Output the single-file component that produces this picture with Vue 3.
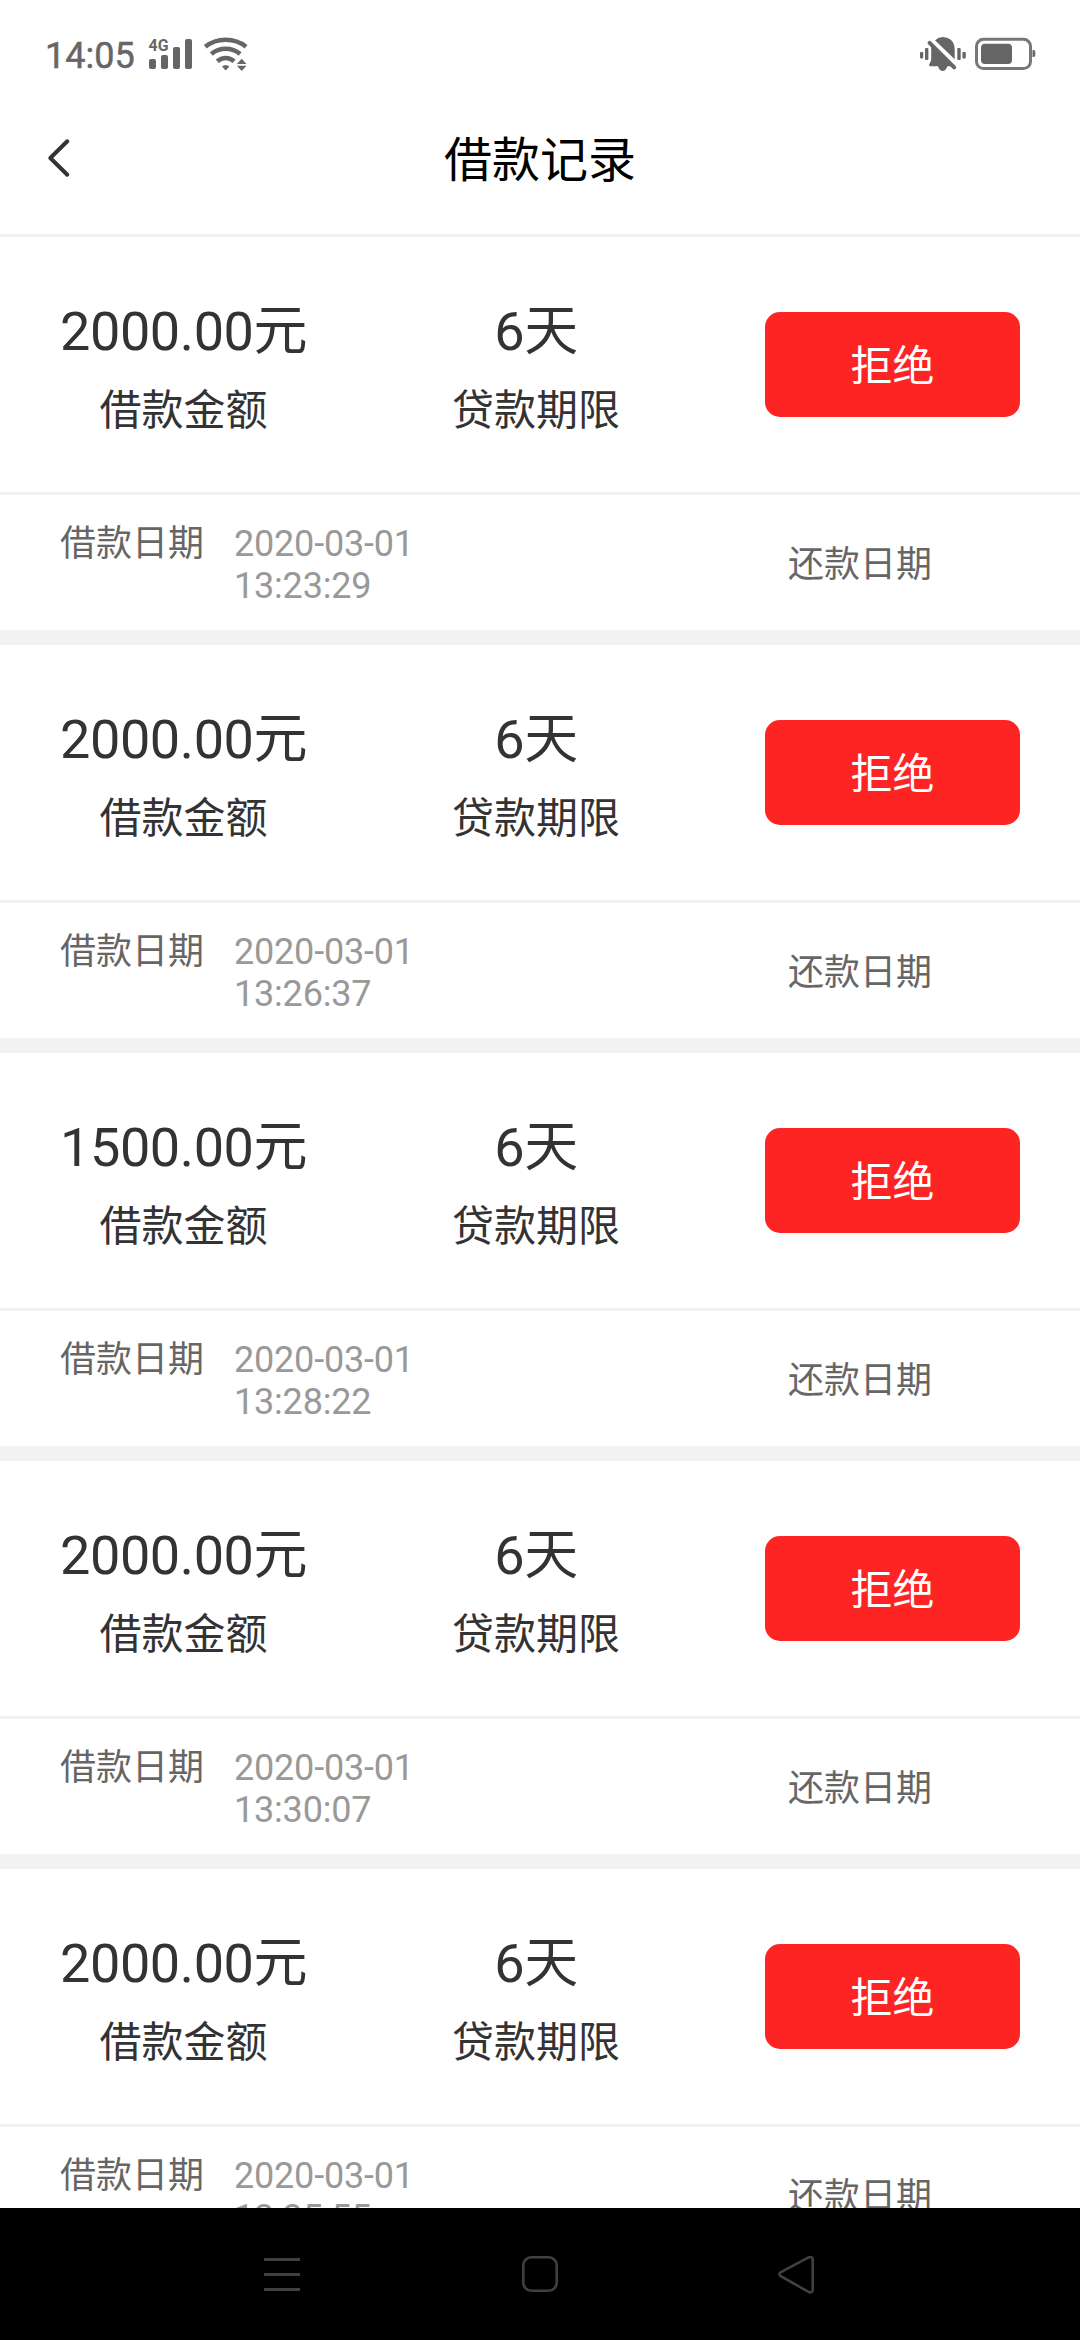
<script setup>
const records = [
  { amount: '2000.00', days: 6, date: '2020-03-01', time: '13:23:29' },
  { amount: '2000.00', days: 6, date: '2020-03-01', time: '13:26:37' },
  { amount: '1500.00', days: 6, date: '2020-03-01', time: '13:28:22' },
  { amount: '2000.00', days: 6, date: '2020-03-01', time: '13:30:07' },
  { amount: '2000.00', days: 6, date: '2020-03-01', time: '13:35:55' },
]
</script>

<template>
  <div class="screen">
    <div class="status">
      <span class="clock">14:05</span>
      <svg class="signal" width="104" height="40" viewBox="146 35 104 40">
        <g fill="#666">
          <text x="148.5" y="51" font-size="17" font-weight="700" textLength="20" lengthAdjust="spacingAndGlyphs">4G</text>
          <rect x="149" y="59" width="7" height="10" rx="2" />
          <rect x="161" y="55" width="7" height="14" rx="2" />
          <rect x="173" y="47" width="7" height="22" rx="2" />
          <rect x="185" y="39" width="7" height="30" rx="2" />
          <path d="M222 66.5q3.7-3 7.4 0l-3.7 4z" />
          <path d="M241.7 58.8l4.8 5.2h-9.6zM241.7 71l4.8-5.2h-9.6z" />
        </g>
        <g fill="none" stroke="#666" stroke-width="4.6">
          <path d="M205.3 46.8Q214 39.8 225.7 39.8T246.1 46.8" />
          <path d="M211.3 54Q217.5 48.8 225.7 48.8T240.1 54" />
          <path d="M217.3 61.3Q221 58 225.7 58T234.1 61.3" />
        </g>
      </svg>
      <svg class="power" width="120" height="40" viewBox="918 35 120 40">
        <g fill="#666">
          <rect x="920" y="52" width="3.2" height="6.4" rx="1" />
          <rect x="925" y="48" width="3.4" height="12" rx="1" />
          <rect x="957.3" y="48" width="3.4" height="12" rx="1" />
          <rect x="962.4" y="52" width="3.4" height="6.4" rx="1" />
          <path d="M935 40.2Q938.5 37 943 37Q954.6 38 954.7 50V59.3z" />
          <path d="M931.2 45.5L952 66.3H947.3Q946 71 942.6 71T938 66.3H930Q928 65 930.2 62.6Q931.2 61.5 931.2 59z" />
          <rect x="981" y="43.8" width="31" height="20.2" rx="4" />
          <path d="M1032.5 50h1a1.8 1.8 0 0 1 1.8 1.8v3.4a1.8 1.8 0 0 1-1.8 1.8h-1z" />
        </g>
        <path d="M929.6 42.8L954.2 67.4" stroke="#666" stroke-width="4" stroke-linecap="round" />
        <rect x="976.5" y="39.3" width="54" height="29.3" rx="7" fill="none" stroke="#777" stroke-width="3" />
      </svg>
    </div>

    <header class="header">
      <svg class="back" width="28" height="44" viewBox="0 0 28 44">
        <path d="M23.3 5.3L6.3 22L23.3 38.7" fill="none" stroke="#333" stroke-width="4" stroke-linecap="round" stroke-linejoin="round" />
      </svg>
      <h1>借款记录</h1>
    </header>

    <main class="list">
      <section v-for="(r, i) in records" :key="i" class="card">
        <div class="summary">
          <div class="col">
            <div class="value">{{ r.amount }}元</div>
            <div class="label">借款金额</div>
          </div>
          <div class="col">
            <div class="value">{{ r.days }}天</div>
            <div class="label">贷款期限</div>
          </div>
          <button class="state">拒绝</button>
        </div>
        <div class="dates">
          <span class="name">借款日期</span>
          <span class="when">{{ r.date }} {{ r.time }}</span>
          <span class="name due">还款日期</span>
        </div>
      </section>
    </main>

    <nav class="nav">
      <svg width="42" height="42" viewBox="0 0 42 42"><path d="M3 6.5H39M3 21.5H39M3 36.5H39" stroke="#404040" stroke-width="3" /></svg>
      <svg width="42" height="42" viewBox="0 0 42 42"><rect x="4.3" y="4.3" width="33.4" height="33.4" rx="8" fill="none" stroke="#404040" stroke-width="2.6" /></svg>
      <svg width="42" height="42" viewBox="0 0 42 42"><path d="M32 4.2L3.5 19.3Q1.3 21.2 3.5 23L32 39.2Q35.6 40.2 35.7 36.5V7Q35.6 3.2 32 4.2z" fill="none" stroke="#404040" stroke-width="2.6" stroke-linejoin="round" /></svg>
    </nav>
  </div>
</template>

<style>
body {
  margin: 0;
  background: #fff;
}
</style>

<style scoped>
.screen {
  display: flex;
  flex-direction: column;
  width: 1080px;
  height: 2340px;
  overflow: hidden;
  background: #fff;
  font-family: Roboto, "Noto Sans CJK SC", sans-serif;
}
.status {
  display: flex;
  flex: none;
  align-items: flex-start;
  box-sizing: border-box;
  height: 110px;
  padding: 35px 42px 0 45px;
}
.clock {
  width: 101px;
  font-size: 36px;
  line-height: 42px;
  color: #666;
  -webkit-text-stroke: 0.5px #666;
}
.power {
  margin-left: auto;
}
.header {
  display: grid;
  flex: none;
  grid-template-columns: 28px 1fr 28px;
  box-sizing: border-box;
  height: 127px;
  padding: 21px 44px 0;
  border-bottom: 3px solid #f2f2f2;
}
.back {
  margin-top: 5px;
}
h1 {
  margin: 0;
  font-size: 48px;
  font-weight: 400;
  line-height: 60px;
  text-align: center;
  color: #000;
}
.list {
  flex: 1;
  min-height: 0;
  overflow: hidden;
}
.card {
  border-bottom: 15px solid #f2f2f2;
}
.summary {
  display: flex;
  align-items: flex-start;
  justify-content: space-between;
  box-sizing: border-box;
  height: 258px;
  padding: 59px 60px 0;
  border-bottom: 3px solid #f2f2f2;
  color: #333;
}
.col {
  text-align: center;
}
.value {
  font-size: 54px;
  line-height: 72px;
  letter-spacing: -0.4px;
}
.label {
  margin-top: 13px;
  font-size: 42px;
  line-height: 60px;
}
.state {
  width: 255px;
  height: 105px;
  margin-top: 16px;
  padding: 4px 0 0;
  border: 0;
  border-radius: 15px;
  background: #ff2424;
  color: #fff;
  font-family: inherit;
  font-size: 42px;
  line-height: 60px;
}
.dates {
  display: flex;
  align-items: flex-start;
  box-sizing: border-box;
  height: 135px;
  padding: 28px 60px 0;
  font-size: 36px;
  line-height: 42px;
}
.name {
  color: #666;
}
.when {
  width: 210px;
  margin-left: 30px;
  letter-spacing: -0.2px;
  color: #999;
}
.due {
  margin: 21px 0 0 344px;
}
.nav {
  display: flex;
  flex: none;
  align-items: center;
  justify-content: space-between;
  box-sizing: border-box;
  height: 132px;
  padding: 0 261px;
  background: #000;
}
</style>
